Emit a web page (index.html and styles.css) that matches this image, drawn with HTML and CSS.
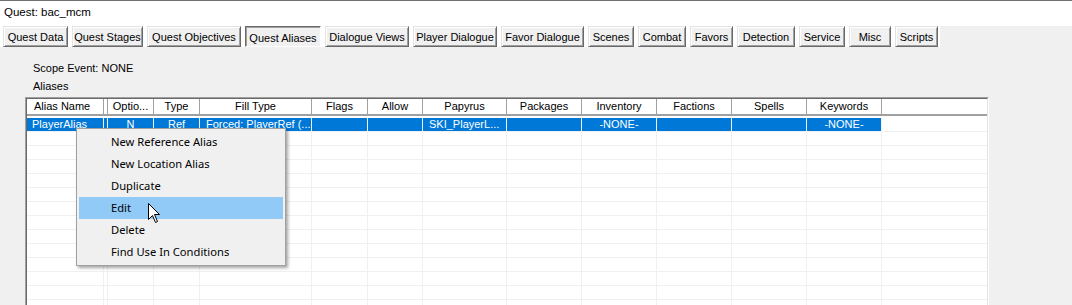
FILE: index.html
```html
<!DOCTYPE html>
<html lang="en">
<head>
    <meta charset="UTF-8">
    <title>Quest: bac_mcm</title>
    <link rel="stylesheet" href="styles.css">
</head>
<body>
    <div class="title">Quest: bac_mcm</div>

    <div class="tabs">
        <button class="tab">Quest Data</button>
        <button class="tab">Quest Stages</button>
        <button class="tab">Quest Objectives</button>
        <button class="tab active">Quest Aliases</button>
        <button class="tab">Dialogue Views</button>
        <button class="tab">Player Dialogue</button>
        <button class="tab">Favor Dialogue</button>
        <button class="tab">Scenes</button>
        <button class="tab">Combat</button>
        <button class="tab">Favors</button>
        <button class="tab">Detection</button>
        <button class="tab">Service</button>
        <button class="tab">Misc</button>
        <button class="tab">Scripts</button>
    </div>

    <div class="content">
        <p class="field">Scope Event: NONE</p>
        <p class="field">Aliases</p>

        <div class="list">
            <div class="list-inner">
                <div class="list-head">
                    <div class="hcell left">Alias Name</div>
                    <div class="hcell"></div>
                    <div class="hcell">Optio...</div>
                    <div class="hcell">Type</div>
                    <div class="hcell">Fill Type</div>
                    <div class="hcell">Flags</div>
                    <div class="hcell">Allow</div>
                    <div class="hcell">Papyrus</div>
                    <div class="hcell">Packages</div>
                    <div class="hcell">Inventory</div>
                    <div class="hcell">Factions</div>
                    <div class="hcell">Spells</div>
                    <div class="hcell">Keywords</div>
                    <div class="hcell filler"></div>
                </div>
                <div class="list-body" id="list-body">
                    <div class="row selected">
                        <div class="cell first">PlayerAlias</div>
                        <div class="cell narrow"></div>
                        <div class="cell center">N</div>
                        <div class="cell center">Ref</div>
                        <div class="cell">Forced: PlayerRef (...</div>
                        <div class="cell"></div>
                        <div class="cell"></div>
                        <div class="cell">SKI_PlayerL...</div>
                        <div class="cell"></div>
                        <div class="cell center">-NONE-</div>
                        <div class="cell"></div>
                        <div class="cell"></div>
                        <div class="cell center">-NONE-</div>
                        <div class="cell filler"></div>
                    </div>
                </div>
            </div>
        </div>
    </div>

    <div class="menu">
        <div class="menu-item">New Reference Alias</div>
        <div class="menu-item">New Location Alias</div>
        <div class="menu-item">Duplicate</div>
        <div class="menu-item hover">Edit</div>
        <div class="menu-item">Delete</div>
        <div class="menu-item">Find Use In Conditions</div>
    </div>

    <svg class="cursor" width="13" height="21" viewBox="0 0 13 21">
        <path d="M0.5 0.5 L0.5 16.5 L4.5 12.5 L7.5 19.5 L9.5 18.5 L6.5 11.5 L11.5 11.5 Z" fill="#fff" stroke="#000" stroke-width="1" stroke-linejoin="miter"/>
    </svg>

    <script>
        // fill the rest of the list with empty grid rows
        const listBody = document.getElementById('list-body');
        for (let i = 0; i < 13; i++) {
            const row = document.createElement('div');
            row.className = 'row';
            for (let c = 0; c < 14; c++) {
                const cell = document.createElement('div');
                cell.className = 'cell';
                if (c === 1) cell.className += ' narrow';
                if (c === 13) cell.className += ' filler';
                row.appendChild(cell);
            }
            listBody.appendChild(row);
        }
    </script>
</body>
</html>
```

FILE: styles.css
```css
:root {
    --face: #f0f0f0;
    --shadow: #a0a0a0;
    --dark: #696969;
    --grid: #f0f0f0;
    --select: #0078d7;
    --menu-hover: #91c9f7;
    --cols: 77px 4px 46px 46px 112px 56px 55px 84px 75px 75px 75px 75px 75px 1fr;
}

* {
    margin: 0;
    padding: 0;
    box-sizing: border-box;
}

html, body {
    height: 305px;
    overflow: hidden;
}

body {
    position: relative;
    background-color: var(--face);
    border-top: 1px solid #707070;
    font-family: "Liberation Sans", Arial, sans-serif;
    font-size: 11px;
    color: #000;
}

.title {
    height: 25px;
    padding: 4px 0 0 4px;
    background-color: #fff;
    font-size: 11.5px;
    line-height: 15px;
}

.tabs {
    display: flex;
    gap: 4px;
    width: max-content;
    height: 21px;
    padding: 0 2px 0 3px;
    background-color: #fff;
}

.tab {
    height: 21px;
    padding: 0;
    font: inherit;
    color: #000;
    background-color: var(--face);
    border: 1px solid;
    border-color: #e3e3e3 var(--dark) var(--dark) #e3e3e3;
    box-shadow: inset 1px 1px #fff, inset -1px -1px var(--shadow);
}

.tab.active {
    border-color: var(--dark) #fff #fff var(--dark);
    box-shadow: inset 1px 1px var(--shadow);
    padding-top: 2px;
}

.tab:nth-child(1) { width: 65px; }
.tab:nth-child(2) { width: 71px; }
.tab:nth-child(3) { width: 94px; }
.tab:nth-child(4) { width: 76px; }
.tab:nth-child(5) { width: 84px; }
.tab:nth-child(6) { width: 84px; }
.tab:nth-child(7) { width: 83px; }
.tab:nth-child(8) { width: 46px; }
.tab:nth-child(9) { width: 48px; }
.tab:nth-child(10) { width: 43px; }
.tab:nth-child(11) { width: 58px; }
.tab:nth-child(12) { width: 46px; }
.tab:nth-child(13) { width: 42px; }
.tab:nth-child(14) { width: 43px; }

.content {
    padding-top: 14px;
}

.field {
    padding-left: 33px;
    line-height: 14px;
    margin-bottom: 4px;
}

/* the list runs on below the window edge, so no bottom border */
.list {
    margin-left: 25px;
    width: 964px;
    height: 208px;
    border: 1px solid;
    border-bottom: none;
    border-color: var(--shadow) #fff #fff var(--shadow);
}

.list-inner {
    height: 100%;
    overflow: hidden;
    background-color: #fff;
    border: 1px solid;
    border-bottom: none;
    border-color: var(--dark) #e3e3e3 #e3e3e3 var(--dark);
}

.list-head {
    display: grid;
    grid-template-columns: var(--cols);
    height: 17px;
}

.hcell {
    min-width: 0;
    border-right: 1px solid var(--shadow);
    border-bottom: 2px solid var(--shadow);
    line-height: 15px;
    text-align: center;
    white-space: nowrap;
    overflow: hidden;
}

.hcell.left {
    text-align: left;
    padding-left: 7px;
}

.hcell.filler {
    border-right: none;
}

.list-body {
    padding-top: 2px;
}

.row {
    display: grid;
    grid-template-columns: var(--cols);
    height: 14px;
    border-bottom: 1px solid var(--grid);
}

.cell {
    min-width: 0;
    padding: 0 6px;
    border-right: 1px solid var(--grid);
    line-height: 13px;
    white-space: nowrap;
    overflow: hidden;
}

.cell.first {
    padding-left: 5px;
}

.cell.narrow {
    padding: 0;
}

.cell.center {
    text-align: center;
}

.cell.filler {
    border-right: none;
}

.row.selected .cell {
    background-color: var(--select);
    color: #fff;
}

.row.selected .cell.filler {
    background-color: transparent;
}

.menu {
    position: absolute;
    left: 76px;
    top: 127px;
    width: 210px;
    padding: 2px;
    background-color: var(--face);
    border: 1px solid var(--shadow);
    box-shadow: 2px 2px 3px rgba(0, 0, 0, 0.35);
    font-family: "Noto Sans", sans-serif;
    font-size: 11.2px;
}

.menu-item {
    height: 22px;
    line-height: 22px;
    padding-left: 32px;
    white-space: nowrap;
}

.menu-item.hover {
    background-color: var(--menu-hover);
}

.cursor {
    position: absolute;
    left: 148px;
    top: 202px;
}
```
